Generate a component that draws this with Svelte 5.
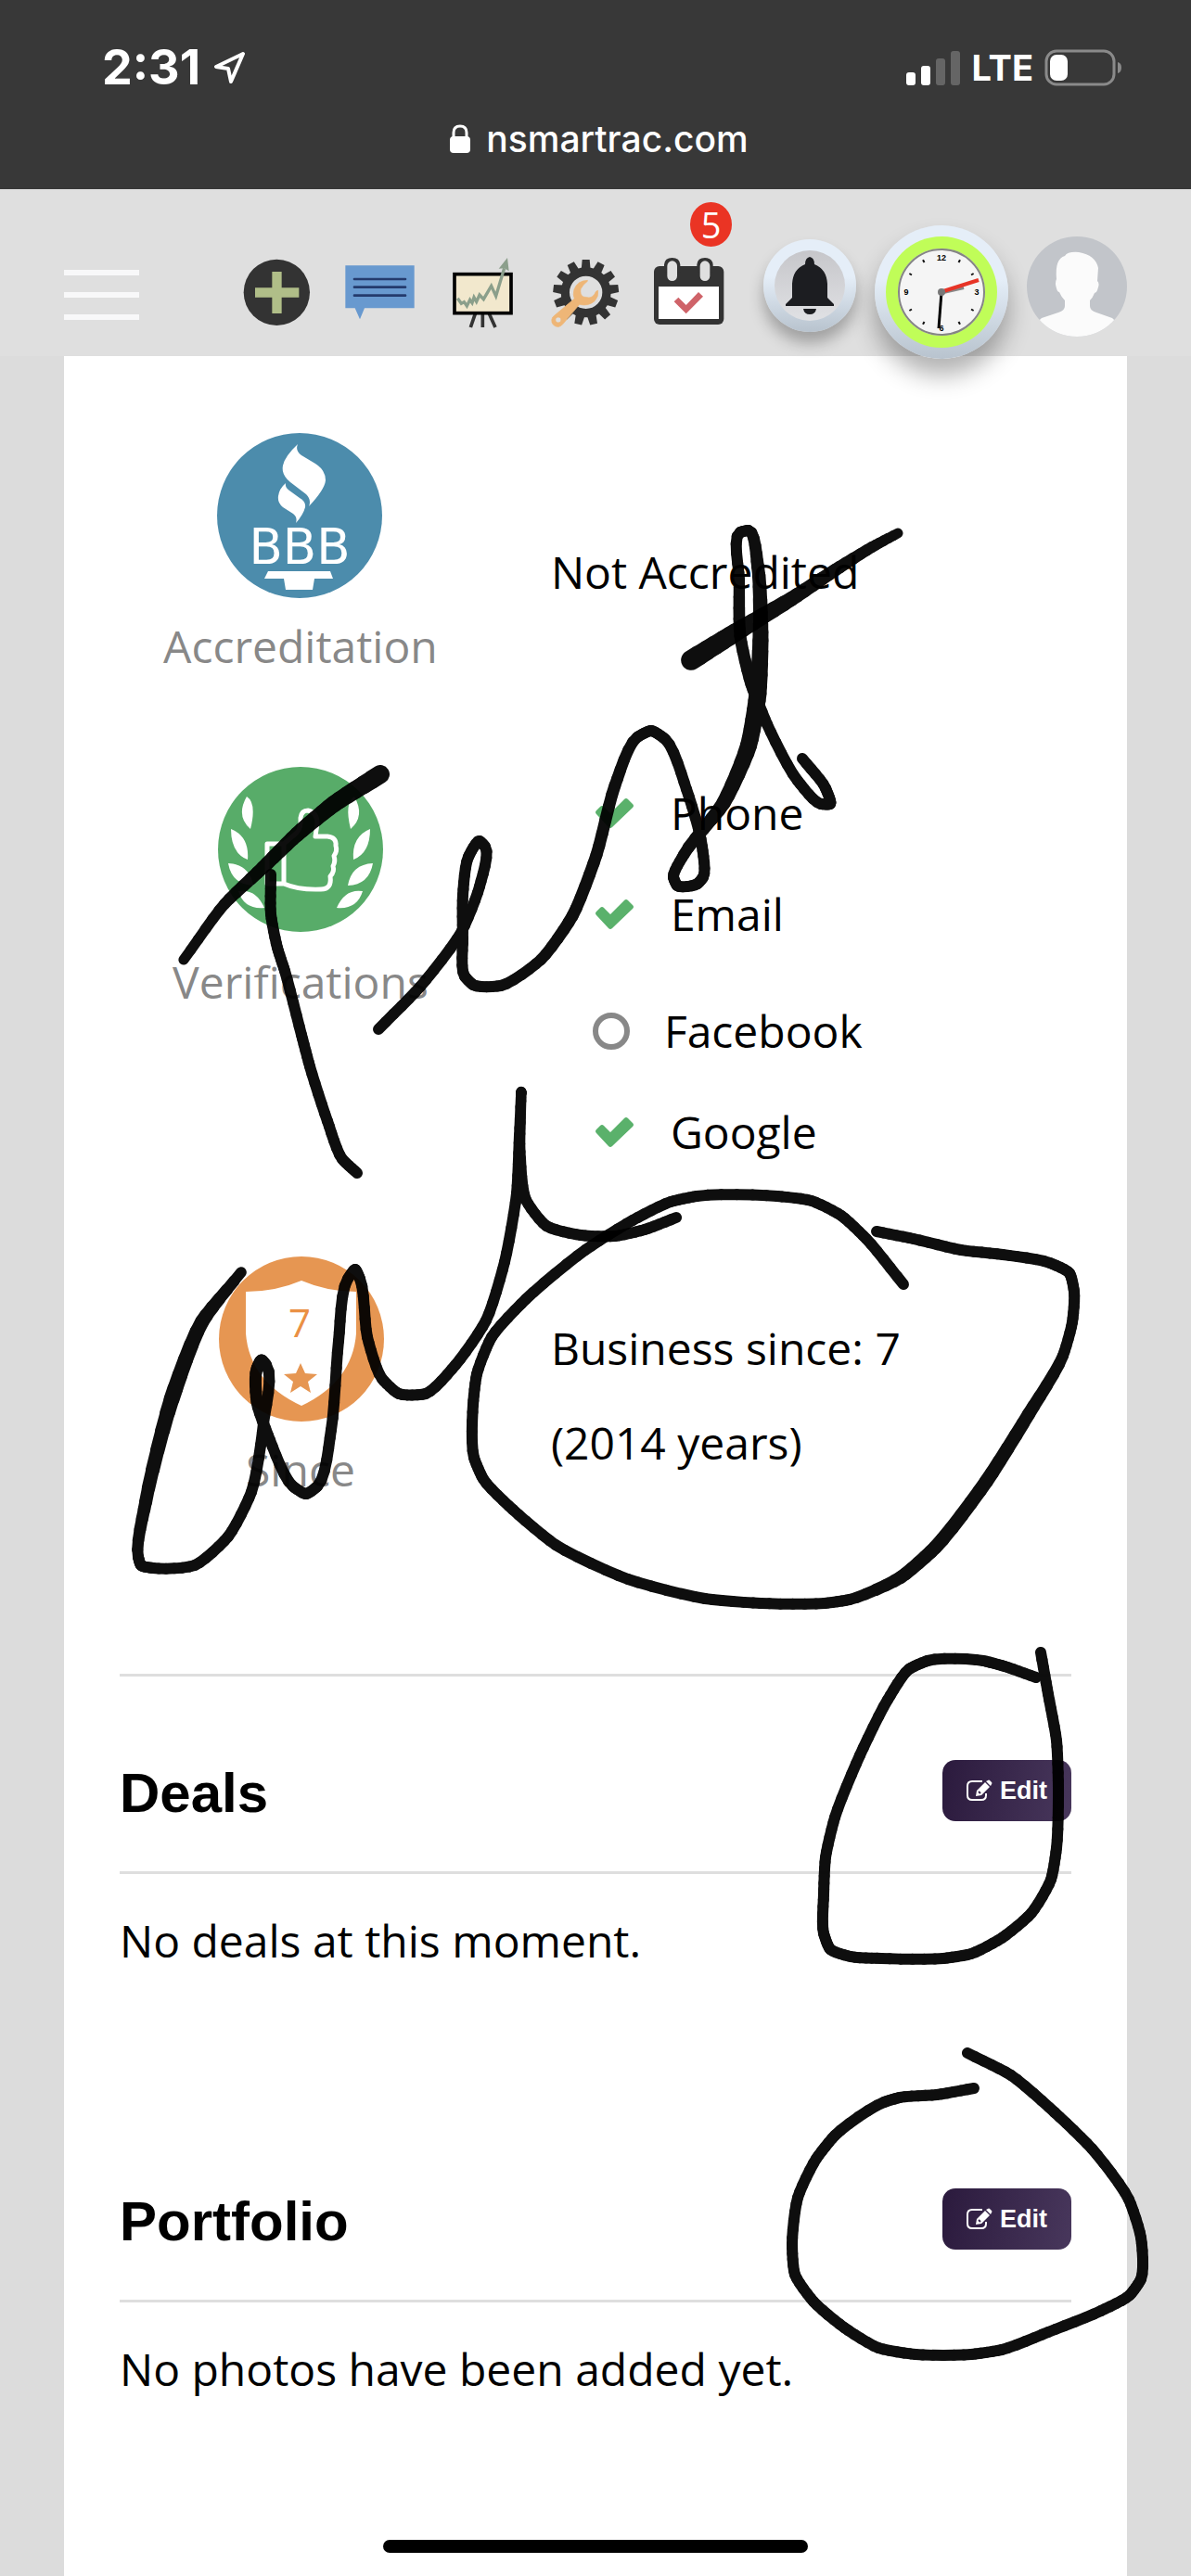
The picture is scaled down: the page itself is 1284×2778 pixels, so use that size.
<script>
  const teeth = Array.from({ length: 13 }, (_, i) => (i * 360) / 13);
  const ticks = [30, 60, 120, 150, 210, 240, 300, 330];
  const checks = [
    { name: 'Phone', done: true },
    { name: 'Email', done: true },
    { name: 'Facebook', done: false },
    { name: 'Google', done: true }
  ];
  const sections = [
    { title: 'Deals', text: 'No deals at this moment.' },
    { title: 'Portfolio', text: 'No photos have been added yet.' }
  ];

  // Pen strokes: x, y, nib width
  const strokes = [
    [[198,1035,11],[242,975,12],[283,936,14],[320,900,16],[360,867,18],[410,835,20]],
    [[292,943,12],[292,986,12],[299,1022,12],[307,1047,12],[325,1116,12],[334,1150,12],[353,1209,12],[369,1250,12],[385,1265,12]],
    [[408,1110,12],[453,1064,12],[498,1004,12],[517,956,12],[523,913,12],[517,907,12],[505,924,12],[499,965,12],[499,1012,12],[501,1053,12],[510,1062,12],[540,1063,12],[583,1035,12],[617,988,13],[643,922,13],[663,847,13],[687,795,12],[702,788,12],[717,797,12],[740,851,12],[757,913,12],[758,946,12],[752,953,12],[730,955,12],[726,946,12],[737,922,12],[780,866,15],[807,804,18],[817,748,19],[820,682,17],[817,611,14],[807,572,12],[798,574,12],[797,625,12],[798,686,13],[810,738,13],[827,781,12],[860,842,12],[885,867,12],[895,867,12],[890,850,12],[865,818,12]],
    [[745,712,22],[793,682,20],[853,646,16],[900,615,14],[940,590,12],[968,575,11]],
    [[260,1372,11],[218,1425,15],[185,1509,17],[157,1620,14],[149,1679,12],[152,1688,12],[165,1691,12],[210,1688,12],[246,1657,12],[271,1609,12],[284,1535,12],[287,1472,12],[282,1467,13],[277,1476,13],[277,1512,13],[291,1553,12],[316,1603,12],[330,1611,12],[342,1603,12],[357,1542,12],[365,1446,12],[375,1379,12],[383,1369,12],[388,1379,12],[396,1442,12],[412,1487,12],[430,1503,12],[459,1503,12],[491,1472,12],[524,1424,12],[544,1361,12],[557,1287,12],[560,1224,12],[562,1178,11],[562,1179,11],[561,1242,11],[567,1294,12],[589,1322,12],[626,1332,12],[663,1333,12],[695,1326,12],[729,1313,12]],
    [[945,1328,12],[985,1336,12],[1036,1348,12],[1081,1353,12],[1132,1362,12],[1153,1373,12],[1158,1393,12],[1156,1426,12],[1146,1462,12],[1109,1525,14],[1063,1598,15],[1008,1669,15],[971,1701,14],[916,1725,12],[889,1729,12],[820,1729,12],[760,1724,12],[677,1703,12],[599,1666,12],[553,1628,12],[521,1595,12],[511,1572,12],[510,1515,12],[514,1482,12],[530,1442,12],[567,1401,12],[631,1348,12],[682,1316,12],[723,1296,12],[751,1290,12],[838,1290,12],[875,1295,12],[907,1311,12],[934,1336,12],[974,1385,12]],
    [[1122,1782,12],[1130,1827,12],[1139,1877,12],[1141,1927,12],[1139,1993,12],[1133,2027,12],[1112,2063,12],[1080,2090,12],[1047,2107,12],[1017,2112,12],[950,2112,12],[917,2110,12],[895,2102,12],[888,2085,12],[888,2043,12],[890,2003,12],[900,1960,12],[927,1893,12],[957,1833,12],[980,1800,12],[1000,1791,12],[1060,1791,12],[1083,1797,12],[1117,1809,12]],
    [[1043,2214,12],[1090,2238,12],[1137,2278,12],[1177,2317,12],[1217,2372,12],[1230,2413,12],[1230,2458,12],[1218,2475,12],[1187,2492,12],[1130,2515,12],[1080,2534,12],[1047,2539,12],[987,2539,12],[947,2532,12],[910,2510,12],[877,2482,12],[857,2453,12],[854,2420,12],[860,2370,12],[880,2328,12],[900,2303,12],[953,2267,12],[970,2262,12],[1010,2259,12],[1050,2252,12]]
  ];

  const STEPS = 6;
  const TENSION = 0.65;
  const gap = (p, q) => Math.hypot(q[0] - p[0], q[1] - p[1]) || 1;

  // Tangent at each point, weighted by the lengths of its two spans
  function tangents(pts) {
    return pts.map((p, i) => {
      const a = pts[i - 1];
      const c = pts[i + 1];
      if (!a) return [0, 1].map((k) => (c[k] - p[k]) / gap(p, c));
      if (!c) return [0, 1].map((k) => (p[k] - a[k]) / gap(a, p));
      const d0 = gap(a, p);
      const d1 = gap(p, c);
      return [0, 1].map((k) => (TENSION * (((p[k] - a[k]) / d0) * d1 + ((c[k] - p[k]) / d1) * d0)) / (d0 + d1));
    });
  }

  function segments(pts) {
    const tan = tangents(pts);
    const out = [];
    let prev = pts[0];
    for (let i = 0; i < pts.length - 1; i++) {
      const b = pts[i];
      const c = pts[i + 1];
      const span = gap(b, c);
      for (let s = 1; s <= STEPS; s++) {
        const t = s / STEPS;
        const t2 = t * t;
        const t3 = t2 * t;
        const at = (k) =>
          (2 * t3 - 3 * t2 + 1) * b[k] +
          (t3 - 2 * t2 + t) * tan[i][k] * span +
          (3 * t2 - 2 * t3) * c[k] +
          (t3 - t2) * tan[i + 1][k] * span;
        const next = [at(0), at(1), b[2] + (c[2] - b[2]) * t];
        out.push({ x1: prev[0], y1: prev[1], x2: next[0], y2: next[1], w: next[2] });
        prev = next;
      }
    }
    return out;
  }
  const ink = strokes.map(segments);
</script>

<div class="screen">
  <div class="browser">
    <div class="status">
      <div class="time">
        <span>2:31</span>
        <svg width="36" height="36" viewBox="0 0 36 36" aria-hidden="true">
          <path d="M32 3 L3 17 L16 19 L19 33 Z" fill="none" stroke="#fff" stroke-width="4" stroke-linejoin="round" />
        </svg>
      </div>
      <div class="signal">
        <svg width="60" height="38" viewBox="0 0 60 38" aria-hidden="true">
          <rect x="1" y="24" width="10" height="14" rx="3" fill="#fff" />
          <rect x="17" y="17" width="10" height="21" rx="3" fill="#fff" />
          <rect x="33" y="9" width="10" height="29" rx="3" fill="#656565" />
          <rect x="49" y="1" width="10" height="37" rx="3" fill="#656565" />
        </svg>
        <span>LTE</span>
        <svg width="82" height="40" viewBox="0 0 82 40" aria-hidden="true">
          <rect x="2" y="2" width="73" height="36" rx="11" fill="none" stroke="#8a8a8a" stroke-width="3" />
          <rect x="6" y="6" width="19" height="28" rx="7" fill="#fff" />
          <path d="M79 14 Q83 15 83 20 Q83 25 79 26 Z" fill="#8a8a8a" />
        </svg>
      </div>
    </div>
    <div class="address">
      <svg width="22" height="32" viewBox="0 0 22 32" aria-hidden="true">
        <rect x="0" y="13" width="22" height="18" rx="4" fill="#fff" />
        <path d="M4 15 V9 Q4 2 11 2 Q18 2 18 9 V15" fill="none" stroke="#fff" stroke-width="3" />
      </svg>
      <span>nsmartrac.com</span>
    </div>
  </div>

  <header class="topbar">
    <button class="menu" aria-label="Menu"><i></i><i></i><i></i></button>
    <nav class="tools">
      <button aria-label="Add">
        <svg width="72" height="72" viewBox="60 207 216 216">
          <circle cx="175" cy="316" r="107" fill="#333" />
          <path d="M160 249 H191 V301 H247 V332 H191 V384 H160 V332 H105 V301 H160 Z" fill="#b0be88" />
        </svg>
      </button>
      <button aria-label="Messages">
        <svg width="76" height="72" viewBox="390 207 228 216">
          <path d="M397 229 H620 V367 H459 L444 403 L428 367 H397 Z" fill="#6899cf" />
          <path d="M426 273 H591 M426 299 H591 M426 326 H591" stroke="#243b6d" stroke-width="8" stroke-linecap="round" />
        </svg>
      </button>
      <button aria-label="Reports">
        <svg width="72" height="72" viewBox="42 57 216 216">
          <path d="M127 235 L112 279 M151 235 V279 M172 235 L192 279" stroke="#333" stroke-width="11" />
          <rect x="60" y="107" width="183" height="126" fill="#f2e8cd" stroke="#000" stroke-width="11" />
          <path d="M70 185 L82 202 L91 197 L100 210 L110 190 L117 200 L123 182 L131 196 L141 174 L154 188 L179 145 L194 178 L221 88" fill="none" stroke="#8b9f8b" stroke-width="10" />
          <path d="M231 54 L236 97 L221 88 L203 89 Z" fill="#8b9f8b" />
        </svg>
      </button>
      <button aria-label="Settings">
        <svg width="72" height="72" viewBox="372 57 216 216">
          <circle cx="485" cy="166" r="67" fill="none" stroke="#333" stroke-width="28" />
          {#each teeth as a}
            <path d="M473 60 H497 L500 94 H470 Z" fill="#333" transform="rotate({a} 485 166)" />
          {/each}
          <path fill-rule="evenodd" fill="#eeb677" stroke="#eeb677" stroke-width="2" stroke-linejoin="round" d="M490 127 Q458 128 447 156 Q442 174 448 186 L384 240 A20 20 0 1 0 411 268 L464 205 Q492 212 513 194 Q527 180 524 160 Q517 160 513 172 Q505 183 495 183 L476 180 Q465 172 468 155 Q474 142 490 130 Z M396 246 A9 9 0 1 1 395 246 Z" />
        </svg>
      </button>
      <button class="calendar" aria-label="Calendar, 5 new">
        <svg width="78" height="72" viewBox="702 57 234 216">
          <rect x="705" y="81" width="226" height="189" rx="18" fill="#333" />
          <rect x="743" y="59" width="42" height="74" rx="20" fill="#333" />
          <rect x="849" y="59" width="42" height="74" rx="20" fill="#333" />
          <path d="M738 100 V76 Q740 54 764 54 Q788 54 790 76 V100 Z M844 100 V76 Q846 54 870 54 Q894 54 896 76 V100 Z" fill="#333" />
          <rect x="748" y="64" width="32" height="65" rx="16" fill="#dfdfdf" />
          <rect x="854" y="64" width="32" height="65" rx="16" fill="#dfdfdf" />
          <rect x="720" y="147" width="195" height="105" fill="#fff" />
          <path d="M770 196 L784 182 L809 207 L849 165 L864 179 L809 235 Z" fill="#cf6369" />
        </svg>
        <span class="badge">5</span>
      </button>
    </nav>
    <nav class="account">
      <button class="disc bell" aria-label="Notifications">
        <svg width="100" height="100" viewBox="0 0 100 100">
          <defs>
            <linearGradient id="inner" x1="0" y1="0" x2="0" y2="1">
              <stop offset="0" stop-color="#c6c6ca" />
              <stop offset="1" stop-color="#e0e1e4" />
            </linearGradient>
          </defs>
          <circle cx="50" cy="50" r="38" fill="url(#inner)" />
          <path d="M50 19 Q55 20 55 27 Q68 32 69 48 V63 L76 70 V72 H24 V70 L31 63 V48 Q32 32 45 27 Q45 20 50 19 Z M43 75 H57 Q56 81 50 81 Q44 81 43 75 Z" fill="#1c1d21" />
        </svg>
      </button>
      <button class="disc clock" aria-label="Time clock">
        <svg width="144" height="144" viewBox="0 0 144 144">
          <circle cx="72" cy="72" r="60" fill="#c0fd58" />
          <circle cx="72" cy="72" r="47" fill="#f5f5f5" />
          <circle cx="72" cy="72" r="46" fill="none" stroke="#858585" stroke-width="2" />
          {#each ticks as a}
            <rect x="71" y="32" width="2" height="3" fill="#111" transform="rotate({a} 72 72)" />
          {/each}
          <g class="digits">
            <text x="72" y="38">12</text>
            <text x="110" y="75">3</text>
            <text x="72" y="114">6</text>
            <text x="34" y="75">9</text>
          </g>
          <path d="M74 72 L96 67" stroke="#888" stroke-width="4" />
          <path d="M72 72 L69 111" stroke="#000" stroke-width="3" />
          <path d="M74 71 L112 59" stroke="#e73427" stroke-width="4" />
          <circle cx="72" cy="72" r="4" fill="#777" />
        </svg>
      </button>
      <button class="avatar" aria-label="Profile">
        <svg width="108" height="108" viewBox="0 0 108 108">
          <clipPath id="round"><circle cx="54" cy="54" r="54" /></clipPath>
          <g clip-path="url(#round)">
            <rect width="108" height="108" fill="#c2c5ca" />
            <path d="M32 46 Q30 24 41 21 Q44 16 56 17 Q74 20 77 34 L76 48 Q79 50 76 58 Q75 61 73 61 Q71 66 68 69 V75 Q68 80 75 82 L92 88 Q98 92 104 108 H4 Q10 92 16 88 L34 82 Q41 80 41 75 V69 Q37 65 35 60 Q33 60 32 56 Q30 50 32 46 Z" fill="#fbfbfb" />
          </g>
        </svg>
      </button>
    </nav>
  </header>

  <main class="card">
    <section class="facts">
      <div class="fact">
        <figure>
          <svg width="180" height="180" viewBox="0 0 180 180" aria-hidden="true">
            <circle cx="89" cy="90" r="89" fill="#4c8cac" />
            <path d="M87 13 Q84 20 91 25 L106 34 Q117 41 117 52 Q116 62 99 80 Q102 73 96 67 L79 54 Q69 46 71 36 Q73 26 87 13 Z M74 55 Q73 60 78 63 L89 71 Q96 75 95 81 Q93 89 85 98 Q87 92 82 88 L71 81 Q65 76 66 69 Q67 61 74 55 Z M55 150 H122 L125 158 H105 L103 170 H74 L72 158 H51 Z" fill="#fff" />
            <text class="bbb" x="89" y="142">BBB</text>
          </svg>
          <figcaption>Accreditation</figcaption>
        </figure>
        <p class="single">Not Accredited</p>
      </div>

      <div class="fact">
        <figure>
          <svg width="180" height="180" viewBox="0 0 180 180" aria-hidden="true">
            <circle cx="90" cy="88" r="89" fill="#58ac69" />
            {#each [1, -1] as side}
              <g transform="translate(90 0) scale({side} 1)" fill="#fff">
                <path d="M-58 31 Q-47 38 -54 66 Q-70 52 -58 31 Z M-75 66 Q-55 74 -57 99 Q-75 92 -75 66 Z M-78 103 Q-55 104 -51 127 Q-74 126 -78 103 Z M-67 133 Q-48 130 -39 151 Q-61 153 -67 133 Z" />
              </g>
            {/each}
            <path d="M72 82 H54 V125 H72 Z M72 82 L86 70 Q91 64 90 54 Q91 46 98 46 Q108 48 108 60 L106 74 H119 Q129 75 128 84 Q130 90 126 95 Q128 101 125 106 Q127 112 122 117 Q124 131 112 131 Q88 132 72 125" fill="none" stroke="#fff" stroke-width="5" stroke-linejoin="round" />
          </svg>
          <figcaption>Verifications</figcaption>
        </figure>
        <ul>
          {#each checks as item}
            <li class:open={!item.done}>
              {#if item.done}
                <svg width="48" height="36" viewBox="0 0 48 36" aria-hidden="true">
                  <path d="M4 19 Q2 17 4 15 L8 11 Q10 9 12 11 L19 18 L34 3 Q36 1 38 3 L43 8 Q45 10 43 12 L21 33 Q19 35 17 33 Z" fill="#5ab16b" />
                </svg>
              {:else}
                <svg width="41" height="42" viewBox="0 0 41 42" aria-hidden="true">
                  <circle cx="20" cy="21" r="17" fill="none" stroke="#888" stroke-width="6" />
                </svg>
              {/if}
              <span>{item.name}</span>
            </li>
          {/each}
        </ul>
      </div>

      <div class="fact">
        <figure>
          <svg width="180" height="180" viewBox="0 0 180 180" aria-hidden="true">
            <circle cx="91" cy="90" r="89" fill="#e69652" />
            <path d="M31 39 Q63 39 91 27 Q119 39 150 39 V84 Q146 136 91 162 Q35 136 31 84 Z" fill="#fff" />
            <path d="M90 116 L95 127 L108 128 L98 136 L101 148 L90 141 L79 148 L82 136 L72 128 L85 127 Z" fill="#e69652" />
            <text class="years" x="89" y="88">7</text>
          </svg>
          <figcaption>Since</figcaption>
        </figure>
        <p class="double">Business since: 7<br />(2014 years)</p>
      </div>
    </section>

    {#each sections as s}
      <section class="block">
        <div class="head">
          <h2>{s.title}</h2>
          <button class="edit">
            <svg width="28" height="24" viewBox="0 0 28 24" aria-hidden="true">
              <path d="M17 2 H6 Q1 2 1 7 V17 Q1 22 6 22 H16 Q21 22 21 17 V15" fill="none" stroke="#fff" stroke-width="2" />
              <path d="M10 18 L11 12 L20 3 L25 8 L16 17 Z M21 2 L23 1 Q24 0 25 1 L27 3 Q28 4 27 5 L26 7 Z" fill="#fff" />
              <path d="M13 13 L15 15" stroke="#35264a" stroke-width="2" />
            </svg>
            <span>Edit</span>
          </button>
        </div>
        <p>{s.text}</p>
      </section>
    {/each}
  </main>

  <svg class="ink" viewBox="0 0 1284 2778" aria-hidden="true">
    {#each ink as stroke}
      <g opacity="0.94">
        {#each stroke as l}
          <line x1={l.x1} y1={l.y1} x2={l.x2} y2={l.y2} stroke-width={l.w} />
        {/each}
      </g>
    {/each}
  </svg>
  <div class="home"></div>
</div>

<style>
  :global(body) {
    background: #dcdcdc;
  }
  .screen {
    position: relative;
    min-height: 100vh;
    display: flex;
    flex-direction: column;
    overflow: hidden;
    background: #dcdcdc;
    color: #000;
    font-family: 'Open Sans', 'Noto Sans', sans-serif;
    font-size: 48px;
    line-height: 102px;
  }
  button {
    border: 0;
    padding: 0;
    background: none;
    color: inherit;
    font: inherit;
    cursor: pointer;
  }
  svg {
    display: block;
    flex: none;
    overflow: visible;
  }
  p,
  h2,
  ul,
  figure {
    margin: 0;
    padding: 0;
  }

  .browser {
    box-sizing: border-box;
    height: 204px;
    padding-top: 44px;
    background: #383838;
    color: #fff;
    font-family: Inter, sans-serif;
  }
  .status {
    display: flex;
    justify-content: space-between;
    align-items: center;
    height: 58px;
    padding: 0 76px 0 110px;
    line-height: 58px;
  }
  .time,
  .signal {
    display: flex;
    align-items: center;
    font-weight: 700;
  }
  .time {
    gap: 14px;
    font-size: 52px;
  }
  .signal {
    gap: 12px;
    font-size: 38px;
  }
  .address {
    display: flex;
    justify-content: center;
    align-items: center;
    gap: 17px;
    padding: 24px 0 0 8px;
    font-size: 39px;
    font-weight: 500;
    line-height: 48px;
  }

  .topbar {
    position: relative;
    z-index: 1;
    box-sizing: border-box;
    height: 180px;
    display: flex;
    align-items: center;
    padding: 42px 69px 0;
    background: #dfdfdf;
  }
  .menu {
    display: flex;
    flex-direction: column;
    gap: 18px;
    width: 81px;
    padding-top: 6px;
    margin-right: auto;
  }
  .menu i {
    height: 6px;
    background: #f8f8f9;
  }
  .tools {
    display: flex;
    align-items: center;
    gap: 38px;
    margin-right: 41px;
  }
  .account {
    display: flex;
    align-items: center;
    gap: 20px;
  }
  .calendar {
    position: relative;
  }
  .badge {
    position: absolute;
    top: -61px;
    right: -7px;
    width: 45px;
    height: 48px;
    border-radius: 50%;
    background: #ea3424;
    color: #fff;
    font-size: 38px;
    line-height: 48px;
    text-align: center;
  }
  .disc {
    border-radius: 50%;
    background: linear-gradient(#e5eef8 40%, #b8c3ce);
  }
  .bell {
    margin-bottom: 14px;
    box-shadow: 0 12px 16px rgba(0, 0, 0, 0.28);
  }
  .clock {
    box-shadow: 0 18px 26px rgba(0, 0, 0, 0.3);
  }
  .digits {
    font: bold 9px 'Liberation Sans', sans-serif;
    text-anchor: middle;
  }
  .avatar {
    margin-bottom: 12px;
  }

  .card {
    flex: 1;
    margin: 0 69px;
    padding: 82px 60px 0;
    background: #fff;
  }
  .facts {
    display: flex;
    flex-direction: column;
    gap: 80px;
    padding-bottom: 169px;
    border-bottom: 3px solid #dedede;
  }
  .fact {
    display: grid;
    grid-template-columns: 38% 1fr;
    column-gap: 75px;
    align-items: start;
  }
  figure {
    display: flex;
    flex-direction: column;
    align-items: center;
  }
  figcaption {
    color: #888;
  }
  .single {
    padding-top: 100px;
  }
  .double {
    padding-top: 49px;
  }
  ul {
    display: flex;
    flex-direction: column;
    gap: 13px;
    padding: 1px 0 5px 45px;
    list-style: none;
    line-height: 96px;
  }
  li {
    display: flex;
    align-items: center;
    gap: 36px;
  }
  .open {
    margin-top: 17px;
  }
  .bbb {
    fill: #fff;
    font: 53px 'DejaVu Sans', sans-serif;
    text-anchor: middle;
  }
  .years {
    fill: #ea9044;
    font-size: 42px;
    text-anchor: middle;
  }

  .block + .block {
    padding-top: 126px;
  }
  .head {
    box-sizing: border-box;
    height: 213px;
    display: flex;
    justify-content: space-between;
    align-items: center;
    padding-top: 36px;
    margin-bottom: 21px;
    border-bottom: 3px solid #dedede;
  }
  h2 {
    padding-top: 6px;
    font: bold 60px/72px 'Liberation Sans', sans-serif;
  }
  .edit {
    display: flex;
    align-items: center;
    gap: 8px;
    height: 66px;
    padding: 0 26px;
    border-radius: 14px;
    background: linear-gradient(100deg, #2b1a3d, #48375c);
    color: #fff;
    font: bold 27px/32px 'Liberation Sans', sans-serif;
  }

  .ink {
    position: absolute;
    z-index: 2;
    top: 0;
    left: 0;
    width: 100%;
    pointer-events: none;
  }
  .ink line {
    stroke: #000;
    stroke-linecap: round;
  }
  .home {
    position: absolute;
    z-index: 3;
    bottom: 25px;
    left: 50%;
    width: 458px;
    height: 14px;
    border-radius: 7px;
    background: #000;
    transform: translateX(-50%);
  }
</style>
